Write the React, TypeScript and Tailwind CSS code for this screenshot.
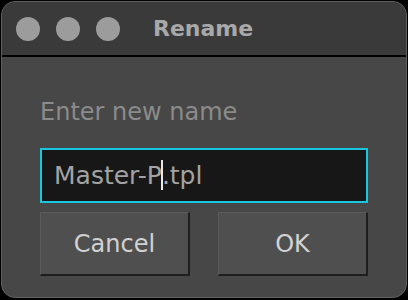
import React from 'react';

const SANS = { fontFamily: '"DejaVu Sans", "Liberation Sans", sans-serif' };

function TrafficLight() {
  return <div className="w-[24px] h-[24px] rounded-full bg-[#9c9c9c] flex-shrink-0" />;
}

function DialogButton({ label }: { label: string }) {
  return (
    <button
      type="button"
      className="w-[150px] h-[64px] bg-[#4f4f4f] border-t border-l border-t-[#5b5b5b] border-l-[#5b5b5b] border-b-2 border-r-2 border-b-[#1e1e1e] border-r-[#1e1e1e] text-[24px] leading-[24px] text-[#d2d2d2] flex items-center justify-center"
      style={SANS}
    >
      {label}
    </button>
  );
}

export default function App() {
  return (
    <div className="w-[408px] h-[300px] bg-black pt-px pl-px">
      <div className="w-[406px] h-[297px] rounded-[14px] border border-[#606060] bg-[#474747] overflow-hidden flex flex-col">
        <div className="h-[55px] bg-[#3a3a3a] border-b-2 border-black flex items-center pl-[14px] flex-shrink-0">
          <div className="flex items-center gap-[16px]">
            <TrafficLight />
            <TrafficLight />
            <TrafficLight />
          </div>
          <span
            className="ml-[33px] text-[22px] leading-[22px] font-bold text-[#a9a9a9]"
            style={SANS}
          >
            Rename
          </span>
        </div>

        <div className="flex flex-col pl-[38px] pt-[43px]">
          <div className="text-[24px] leading-[24px] text-[#8b8b8b]" style={SANS}>
            Enter new name
          </div>

          <div className="mt-[24px] w-[328px] h-[55px] border-2 border-[#18c6e0] bg-[#171717] flex items-center pl-[12px]">
            <span className="text-[25px] leading-[25px] text-[#a3a3a3] whitespace-pre" style={SANS}>
              Master-P
              <span className="relative inline-block w-0 h-[25px] align-top">
                <span className="absolute left-[-1px] top-[-3px] w-[2px] h-[30px] bg-[#e8e8e8]" />
              </span>
              .tpl
            </span>
          </div>

          <div className="mt-[9px] flex gap-[28px]">
            <DialogButton label="Cancel" />
            <DialogButton label="OK" />
          </div>
        </div>
      </div>
    </div>
  );
}
